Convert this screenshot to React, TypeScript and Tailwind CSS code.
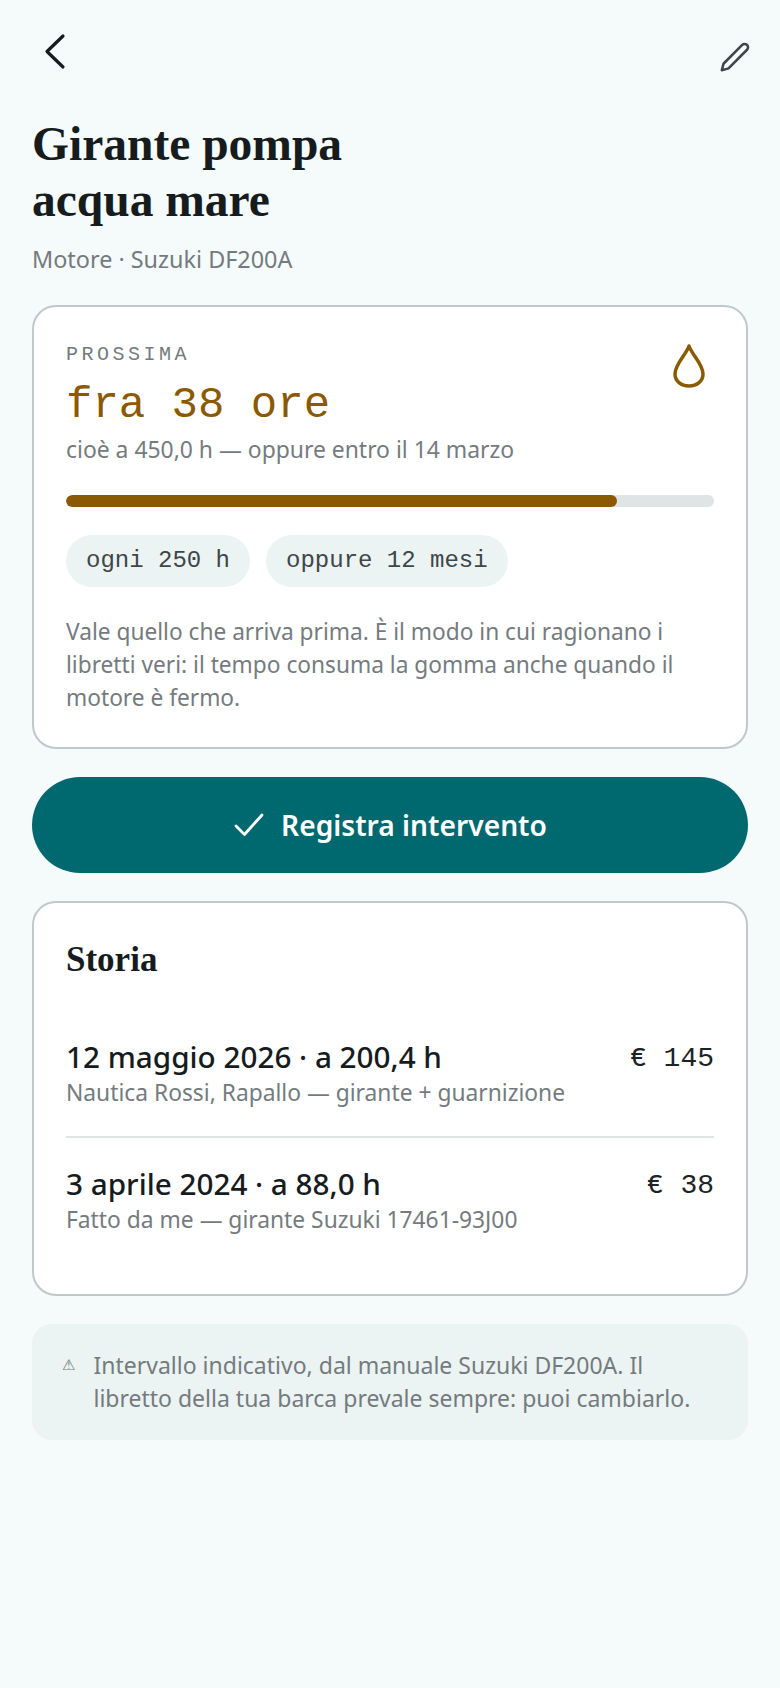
import React from 'react';

const sans = 'font-["Noto_Sans",sans-serif]';
const mono = 'font-["Liberation_Mono",monospace]';
const serif = 'font-["Liberation_Serif",serif]';

const HistoryRow: React.FC<{ title: string; note: string; price: string }> = ({ title, note, price }) => (
    <div className="flex justify-between items-start">
        <div>
            <div className="text-[29.700px] leading-[38px] font-medium text-[#161c1e]">{title}</div>
            <div className="mt-[2px] text-[22.800px] leading-[30px] text-[#747b7e]">{note}</div>
        </div>
        <div className={`${mono} pt-[3px] text-[28px] leading-[36px] text-[#1c2325]`}>{price}</div>
    </div>
);

const Chip: React.FC<{ label: string }> = ({ label }) => (
    <span className={`${mono} text-[24px] leading-[52px] h-[52px] px-5 rounded-full bg-[#ebf3f3] text-[#3e4649]`}>{label}</span>
);

export default function App() {
    return (
        <div className={`${sans} w-[780px] h-[1688px] bg-[#f5fafb] px-8 overflow-hidden`}>
            <header className="flex justify-between items-start pt-[30px]">
                <button className="ml-[11px] text-[#161c1e]">
                    <svg width="30" height="44" viewBox="0 0 30 44" fill="none" stroke="currentColor" strokeWidth="3.200" strokeLinecap="round" strokeLinejoin="round">
                        <path d="M20 6 4 21.500 20 37" />
                    </svg>
                </button>
                <button className="mt-[10px] -mr-[4px] text-[#3e4649]">
                    <svg width="34" height="34" viewBox="0 0 24 24" fill="none" stroke="currentColor" strokeWidth="1.800" strokeLinecap="round" strokeLinejoin="round">
                        <path d="M20.500 3.500a2.400 2.400 0 0 0-3.400 0L4.200 16.400a1.500 1.500 0 0 0-.4.700l-1.100 4.200 4.200-1.100a1.500 1.500 0 0 0 .7-.4L20.500 6.900a2.400 2.400 0 0 0 0-3.400z" />
                    </svg>
                </button>
            </header>

            <h1 className={`${serif} mt-[42px] text-[47.500px] leading-[56px] font-bold text-[#161c1e]`}>Girante pompa<br />acqua mare</h1>
            <p className="mt-[16px] text-[23.400px] leading-[30px] text-[#747b7e]">Motore · Suzuki DF200A</p>

            <section className="mt-[31px] relative rounded-[24px] border-2 border-[#bfc8ca] bg-white px-[32px] pt-[35px] pb-[33px]">
                <div className={`${mono} text-[20px] leading-[26px] tracking-[3.500px] text-[#747b7e]`}>PROSSIMA</div>
                <div className={`${mono} mt-[11px] text-[44px] leading-[52px] text-[#8b5a00]`}>fra 38 ore</div>
                <div className="mt-[4px] text-[22.900px] leading-[30px] text-[#747b7e]">cioè a 450,0 h — oppure entro il 14 marzo</div>
                <div className="absolute top-[37px] right-[40px] text-[#8b5a00]">
                    <svg width="34" height="44" viewBox="0 0 34 44" fill="none" stroke="currentColor" strokeWidth="3.500" strokeLinejoin="round">
                        <path d="M17 2C14 11 3 20 3 30c0 7 6 12 14 12s14-5 14-12C31 20 20 11 17 2z" />
                    </svg>
                </div>
                <div className="mt-[30px] h-3 rounded-full bg-[#dfe4e4] overflow-hidden">
                    <div className="h-full w-[85%] rounded-full bg-[#8b5a00]" />
                </div>
                <div className="mt-7 flex gap-4">
                    <Chip label="ogni 250 h" />
                    <Chip label="oppure 12 mesi" />
                </div>
                <p className="mt-[28px] text-[22.700px] leading-[33px] text-[#747b7e]">Vale quello che arriva prima. È il modo in cui ragionano i libretti veri: il tempo consuma la gomma anche quando il motore è fermo.</p>
            </section>

            <button className="mt-[28px] w-full h-[96px] rounded-full bg-[#00696f] text-white flex items-center justify-center gap-4">
                <svg width="32" height="32" viewBox="0 0 32 32" fill="none" stroke="currentColor" strokeWidth="2.800" strokeLinecap="round" strokeLinejoin="round">
                    <path d="M3 17l8.500 8.500L29 6" />
                </svg>
                <span className="text-[28.200px] font-semibold">Registra intervento</span>
            </button>

            <section className="mt-[28px] rounded-[24px] border-2 border-[#bfc8ca] bg-white px-[32px] pt-[35px] pb-[59px]">
                <h2 className={`${serif} text-[35px] leading-[44px] font-bold text-[#161c1e]`}>Storia</h2>
                <div className="mt-[56px] pb-[28px] border-b-2 border-[#dfe4e4]">
                    <HistoryRow title="12 maggio 2026 · a 200,4 h" note="Nautica Rossi, Rapallo — girante + guarnizione" price="€ 145" />
                </div>
                <div className="mt-[27px]">
                    <HistoryRow title="3 aprile 2024 · a 88,0 h" note="Fatto da me — girante Suzuki 17461-93J00" price="€ 38" />
                </div>
            </section>

            <aside className="mt-[28px] rounded-[20px] bg-[#ebf3f3] pl-[30px] pr-[56px] py-[25px] flex gap-[18px] text-[#747b7e]">
                <span className='font-["DejaVu_Sans",sans-serif] text-[15px] leading-[33px]'>⚠</span>
                <p className="text-[23px] leading-[33px]">Intervallo indicativo, dal manuale Suzuki DF200A. Il libretto della tua barca prevale sempre: puoi cambiarlo.</p>
            </aside>
        </div>
    );
}
